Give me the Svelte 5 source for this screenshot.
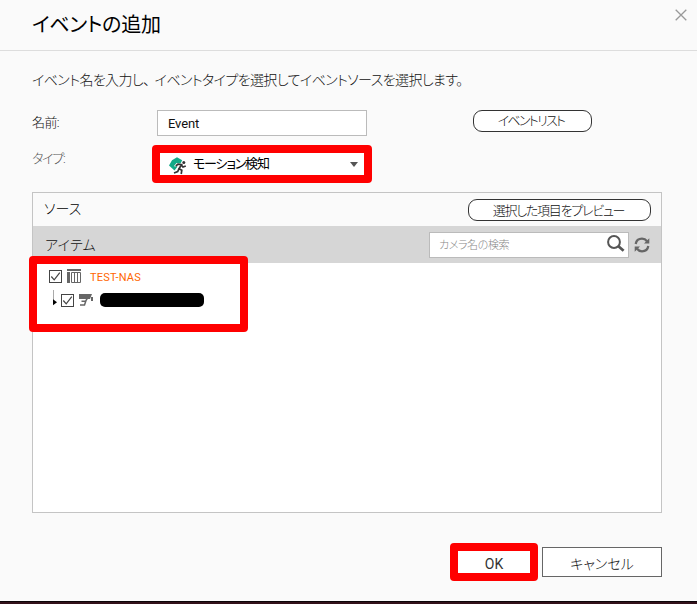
<script lang="ts">
	let name = $state('Event');
	let keyword = $state('');
	let nasChecked = $state(true);
	let cameraChecked = $state(true);
</script>

{#snippet checkbox(checked: boolean)}
	<svg class="check" width="13" height="13" viewBox="0 0 13 13">
		<rect x="0.5" y="0.5" width="12" height="12" />
		{#if checked}
			<path d="M2.3 6.5 L5.2 9.8 L10.8 2.6" />
		{/if}
	</svg>
{/snippet}

<div class="dialog">
	<header class="header">
		<h1 class="title">イベントの追加</h1>
		<button class="close" aria-label="閉じる">
			<svg width="12" height="12" viewBox="0 0 12 12"><path d="M0.7 0.7 L11.3 11.3 M11.3 0.7 L0.7 11.3" /></svg>
		</button>
	</header>

	<p class="intro">イベント名を入力し<span class="comma">、</span>イベントタイプを選択してイベントソースを選択します。</p>

	<div class="row name-row">
		<label class="label" for="name">名前:</label>
		<input id="name" class="name" bind:value={name} />
		<button class="pill event-list">イベントリスト</button>
	</div>

	<div class="row type-row">
		<span class="label type-label">タイプ:</span>
		<button class="select marked">
			<svg class="motion" width="18" height="18" viewBox="0 0 18 18">
				<path d="M0 8.5 L3 3.2 L8 0.3 L13.2 3.2 L11.5 6.4 L7.5 6 L4.8 9.2 L8.6 9.6 L5.5 13.5 Z" fill="#12a987" />
				<circle cx="14.8" cy="5.6" r="1.5" />
				<path class="runner" d="M6.8 9 L9 7.2 L12.5 7.7 L10 11.7 L12.8 13.3 L12.2 17 M10 11.7 L8.7 14.5 L5 16 M12.5 8.2 L14 10 L16.8 9" />
			</svg>
			<span class="select-text">モーション検知</span>
			<svg class="caret" width="8" height="5" viewBox="0 0 8 5"><path d="M0 0 H8 L4 5 Z" /></svg>
		</button>
	</div>

	<section class="panel">
		<div class="panel-head">
			<span class="source">ソース</span>
			<button class="pill preview">選択した項目をプレビュー</button>
		</div>
		<div class="panel-bar">
			<span class="item">アイテム</span>
			<div class="search">
				<input class="keyword" placeholder="カメラ名の検索" bind:value={keyword} />
				<svg width="18" height="17" viewBox="0 0 18 17" fill="none" stroke="#555">
					<circle cx="7" cy="7" r="5.9" stroke-width="2" />
					<path d="M11.4 11.2 L16.6 15.7" stroke-width="2.8" />
				</svg>
			</div>
			<button class="refresh" aria-label="更新">
				<svg width="16" height="16" viewBox="0 0 16 16">
					<path d="M1.7 7 C2.3 3.5 5 1.7 8 1.7 C10.2 1.7 11.8 2.6 13 4.2 M14.3 9 C13.7 12.5 11 14.3 8 14.3 C5.8 14.3 4.2 13.4 3 11.8" fill="none" stroke="#666" stroke-width="2.3" />
					<path d="M15.3 1.2 V6.5 H10 Z M0.7 14.8 V9.5 H6 Z" fill="#666" />
				</svg>
			</button>
		</div>
		<ul class="tree">
			<li class="node">
				<button aria-label="TEST-NAS" onclick={() => (nasChecked = !nasChecked)}>{@render checkbox(nasChecked)}</button>
				<svg class="nas" width="14" height="14" viewBox="0 0 14 14">
					<path d="M0 0 H14 V2 H0 Z M0 3 H3 V14 H0 Z" fill="#666" />
					<path d="M4.5 3.5 H13.5 V13.5 H4.5 Z M7.5 3.5 V13.5 M10.5 3.5 V13.5" fill="none" stroke="#666" />
				</svg>
				<span class="nas-name">TEST-NAS</span>
			</li>
			<li class="node child">
				<svg class="branch" width="5" height="16" viewBox="0 0 5 16">
					<path d="M0.5 0 V11" stroke="#aaa" />
					<path d="M0 9.3 L4 12.3 L0 15.3 Z" fill="#000" />
				</svg>
				<button aria-label="カメラ" onclick={() => (cameraChecked = !cameraChecked)}>{@render checkbox(cameraChecked)}</button>
				<svg class="camera" width="15" height="12" viewBox="0 0 15 12">
					<path d="M0 0 H13 L11 5 H0 Z M12 3 H14 V7 H12 Z" fill="#666" />
					<path d="M8.5 4 L6.5 7.3 H2.5 M7 6.5 L5.5 11 H1" fill="none" stroke="#666" stroke-width="1.5" />
				</svg>
				<span class="redacted"></span>
			</li>
		</ul>
		<div class="tree-mark"></div>
	</section>

	<footer class="actions">
		<button class="ok marked">OK</button>
		<button class="cancel">キャンセル</button>
	</footer>
</div>

<style>
	:global(body) {
		background: #fafafa;
	}

	.dialog {
		box-sizing: border-box;
		display: flex;
		flex-direction: column;
		width: 697px;
		height: 604px;
		overflow: hidden;
		background: linear-gradient(#fafafa 601px, #0c0508 601px, #0c0508 602px, #32101a 602px);
		color: #111;
		font-family: Roboto, "Noto Sans CJK JP", sans-serif;
		font-feature-settings: "palt";
		font-size: 14px;
		font-weight: 300;
		white-space: nowrap;
	}

	button,
	input {
		box-sizing: border-box;
		margin: 0;
		padding: 0;
		border: 0;
		background: none;
		color: inherit;
		font: inherit;
		font-feature-settings: inherit;
		letter-spacing: inherit;
	}

	svg {
		display: block;
		flex: none;
	}

	.header {
		box-sizing: border-box;
		display: flex;
		justify-content: space-between;
		flex: none;
		height: 51px;
		padding: 0 10px 0 32px;
		border-bottom: 1px solid #ddd;
	}

	.title {
		margin: 0;
		color: #000;
		font-size: 20px;
		font-weight: 400;
		line-height: 50px;
		letter-spacing: -0.25px;
	}

	.close {
		align-self: flex-start;
		padding-top: 9px;
	}

	.close path {
		stroke: #999;
		stroke-width: 1.3;
	}

	.intro {
		margin: 19px 0 0 32px;
		line-height: 20px;
		letter-spacing: -0.6px;
	}

	.comma {
		padding-right: 5px;
	}

	.row {
		display: flex;
		flex: none;
		padding-left: 32px;
	}

	.name-row {
		margin-top: 20px;
	}

	.label {
		width: 125px;
		font-size: 13px;
		line-height: 26px;
		letter-spacing: -0.6px;
	}

	.name {
		width: 210px;
		height: 26px;
		padding: 1px 0 0 10px;
		border: 1px solid #bbb;
		background: #fff;
		font-size: 13px;
		font-weight: 400;
		letter-spacing: -0.15px;
	}

	.pill {
		border: 1px solid #333;
		border-radius: 9px;
		background: #fff;
		line-height: 20px;
	}

	.event-list {
		width: 119px;
		height: 22px;
		margin-left: 106px;
		padding-right: 3px;
		font-size: 13px;
		letter-spacing: -1.7px;
	}

	.type-row {
		margin-top: 9px;
	}

	.type-label {
		width: 119.5px;
		color: #555;
		line-height: 28px;
		letter-spacing: -1.3px;
	}

	.marked {
		border: 8px solid #f00;
		border-radius: 4px;
		background: #fff;
	}

	.select {
		display: flex;
		align-items: center;
		width: 220.5px;
		height: 38px;
		padding: 0 6px 0 9.5px;
	}

	.motion {
		margin-top: 3px;
	}

	.motion circle {
		fill: #333;
	}

	.runner {
		fill: none;
		stroke: #333;
		stroke-width: 1.7;
	}

	.select-text {
		flex: 1;
		margin-left: 6px;
		color: #000;
		font-size: 13px;
		font-weight: 400;
		line-height: 20px;
		text-align: left;
		letter-spacing: -1.2px;
	}

	.caret {
		fill: #555;
	}

	.panel {
		position: relative;
		box-sizing: border-box;
		flex: none;
		width: 630px;
		height: 321px;
		margin: 9px 0 0 32px;
		border: 1px solid #c4c4c4;
		background: #fff;
	}

	.panel-head {
		display: flex;
		align-items: center;
		justify-content: space-between;
		height: 33px;
		padding: 0 10px 0 11px;
		background: #fafafa;
	}

	.source {
		padding-bottom: 3px;
		color: #000;
	}

	.preview {
		width: 183px;
		height: 22px;
		padding: 1px 2px 0 0;
		font-size: 13px;
		letter-spacing: -1.25px;
	}

	.panel-bar {
		display: flex;
		align-items: center;
		height: 37px;
		padding: 0 11px 0 12px;
		background: #d6d6d6;
	}

	.item {
		flex: 1;
		padding-bottom: 2px;
		letter-spacing: 0.3px;
	}

	.search {
		box-sizing: border-box;
		display: flex;
		align-items: center;
		width: 200px;
		height: 26px;
		padding: 0 3px 2px 9px;
		border: 1px solid #bbb;
		background: #fff;
	}

	.keyword {
		flex: 1;
		min-width: 0;
		padding-top: 3px;
		font-size: 11px;
		letter-spacing: -0.4px;
	}

	.keyword::placeholder {
		color: #888;
		opacity: 1;
	}

	.refresh {
		margin-left: 5px;
	}

	.tree {
		margin: 0;
		padding: 4px 0 0 16px;
		list-style: none;
	}

	.node {
		display: flex;
		align-items: center;
		height: 18px;
	}

	.check {
		fill: #fff;
		stroke: #444;
	}

	.check path {
		fill: none;
		stroke-width: 1.2;
	}

	.nas {
		margin-left: 5px;
	}

	.nas-name {
		margin-left: 9px;
		padding-top: 2px;
		color: #f60;
		font-size: 11px;
		font-weight: 400;
		letter-spacing: 0.2px;
	}

	.child {
		margin-top: 6px;
		padding-left: 4px;
	}

	.branch {
		margin: -5px 3px 0 0;
	}

	.camera {
		margin-left: 5px;
	}

	.redacted {
		width: 104px;
		height: 14px;
		margin-left: 6px;
		border-radius: 5px;
		background: #000;
	}

	.tree-mark {
		position: absolute;
		top: 63px;
		left: -4.5px;
		box-sizing: border-box;
		width: 219px;
		height: 76px;
		border: 8px solid #f00;
		border-radius: 4px;
	}

	.actions {
		display: flex;
		flex: none;
		align-items: center;
		gap: 4px;
		margin: 30px 0 0 450px;
	}

	.ok {
		width: 88px;
		height: 38px;
		padding-top: 3px;
		color: #333;
		font-weight: 400;
	}

	.cancel {
		width: 120px;
		height: 30px;
		padding-top: 1px;
		border: 1px solid #666;
		background: #fff;
	}
</style>
